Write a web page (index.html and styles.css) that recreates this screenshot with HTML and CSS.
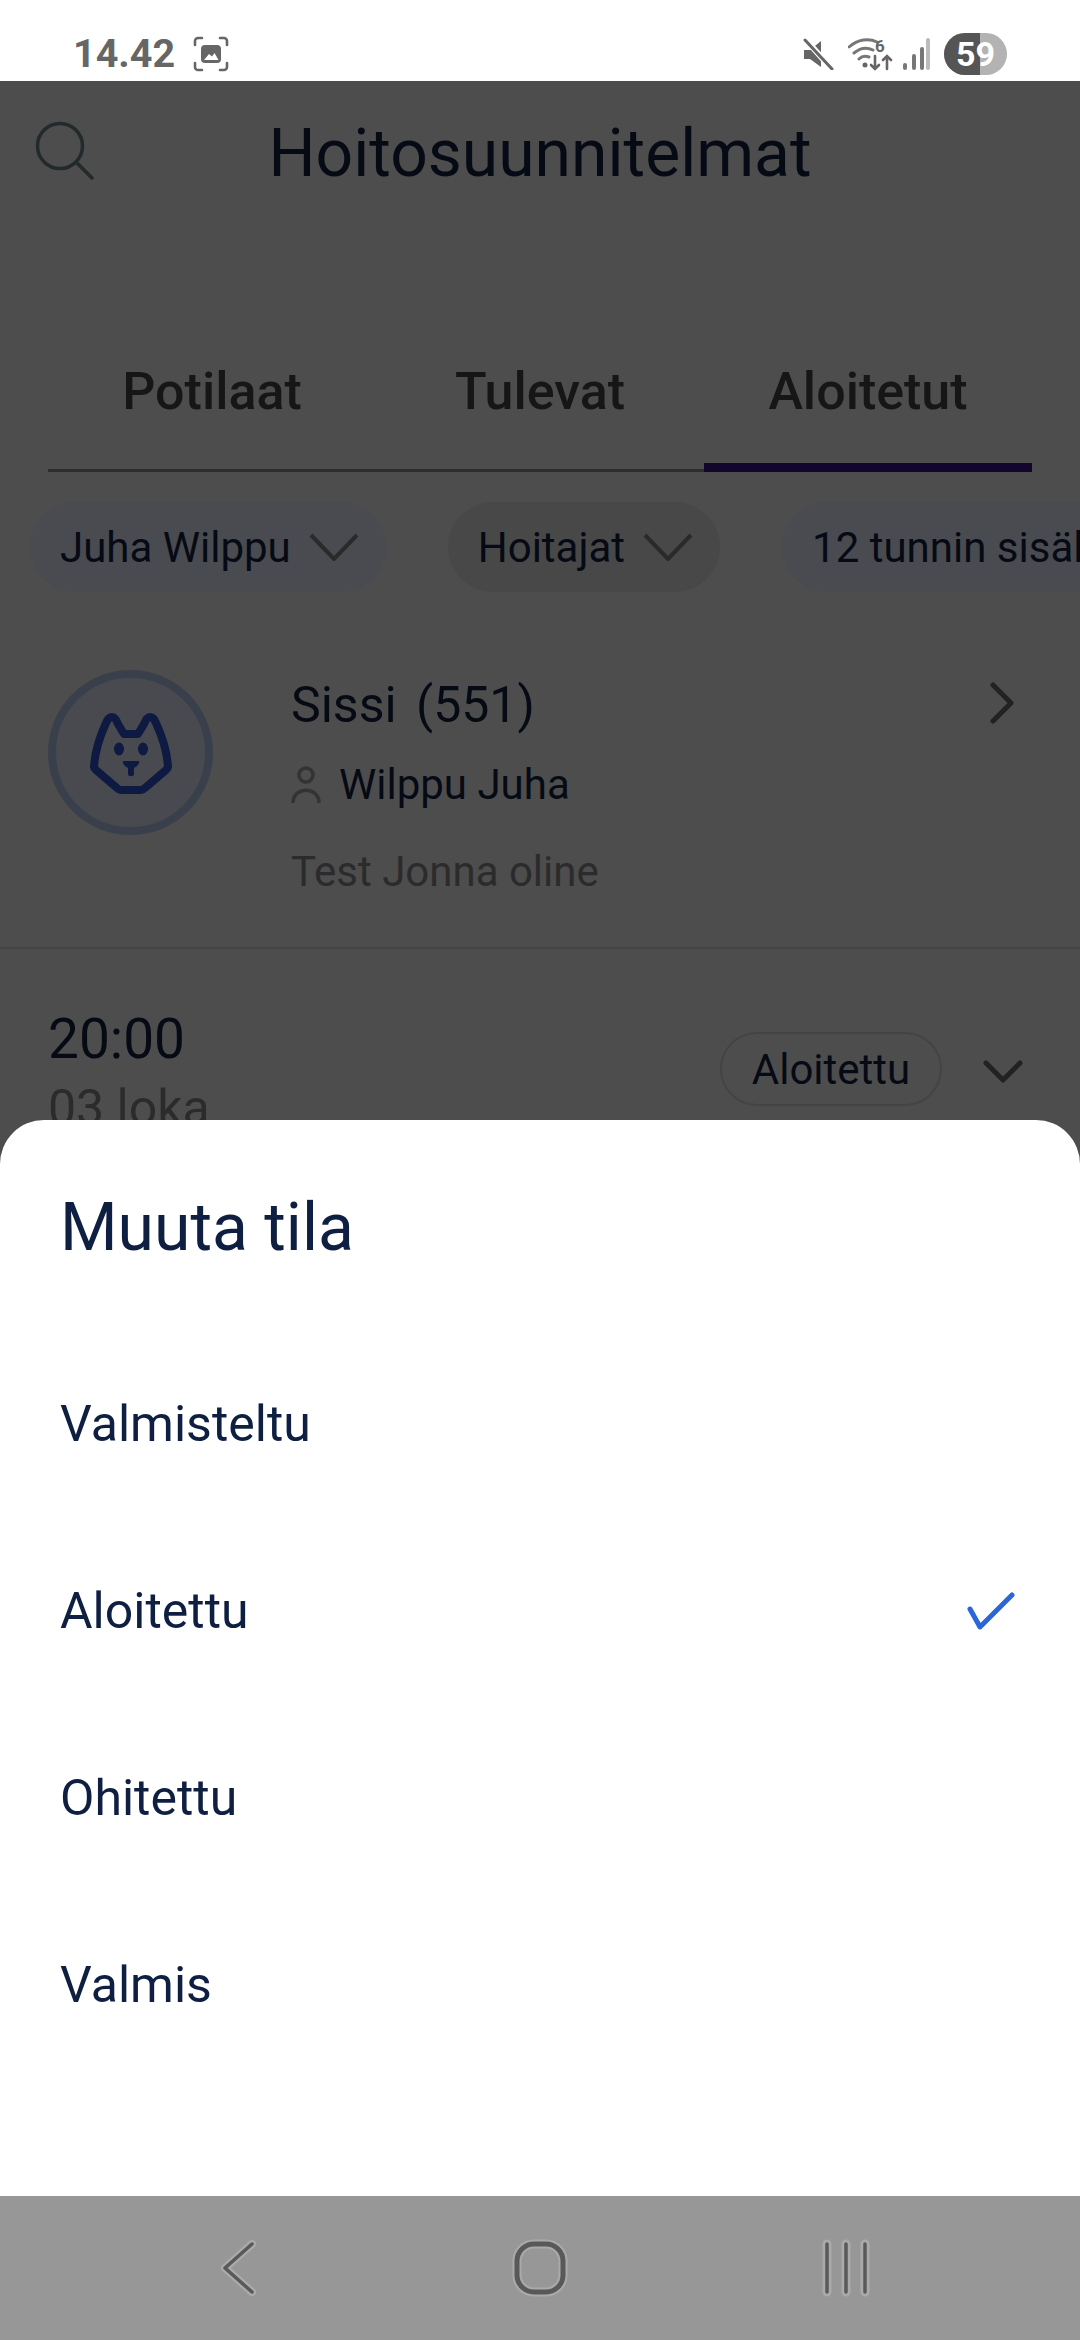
FILE: index.html
```html
<!DOCTYPE html>
<html lang="fi">
<head>
    <meta charset="UTF-8">
    <meta name="viewport" content="width=device-width, initial-scale=1.0">
    <title>Hoitosuunnitelmat</title>
    <link rel="stylesheet" href="styles.css">
</head>
<body>
<div class="phone">
    <div class="status-bar">
        <div class="status-left">
            <span class="clock">14.42</span>
            <svg class="shot-icon" width="36" height="36" viewBox="0 0 36 36" fill="none">
                <path d="M2 9V5a3 3 0 0 1 3-3h4M27 2h4a3 3 0 0 1 3 3v4M34 27v4a3 3 0 0 1-3 3h-4M9 34H5a3 3 0 0 1-3-3v-4" stroke="#666" stroke-width="2.6" stroke-linecap="round"/>
                <rect x="8" y="9" width="20" height="18" rx="4" fill="#666"/>
                <path d="M11 24l5-6 3 2.5 2.5-3.5 4 7z" fill="#fff"/>
            </svg>
        </div>
        <div class="status-right">
            <svg width="32" height="32" viewBox="0 0 32 32">
                <path d="M2 12h6l11-9v26l-11-8H2z" fill="#666"/>
                <path d="M3 1l27 30" stroke="#fff" stroke-width="6"/>
                <path d="M3 2l27 29" stroke="#666" stroke-width="3" stroke-linecap="round"/>
            </svg>
            <svg width="46" height="34" viewBox="0 0 46 34" fill="none">
                <path d="M1 10c9-8 20-9 28-5M6 16c6-5 13-6 19-3M11 22c3-3 7-3 10-2" stroke="#777" stroke-width="3" stroke-linecap="round"/>
                <circle cx="17" cy="28" r="2.5" fill="#666"/>
                <text x="27" y="15" class="wifi-six">6</text>
                <path d="M27 19v13M23 28l4 4 4-4M39 32V20M35 23l4-4 4 4" stroke="#666" stroke-width="2.6" stroke-linecap="round"/>
            </svg>
            <svg class="signal" width="28" height="32" viewBox="0 0 28 32" fill="none" stroke-width="4" stroke-linecap="round">
                <path d="M3 27v3M12 18v12M20 11v19" stroke="#777"/>
                <path d="M26 2v28" stroke="#bbb"/>
            </svg>
            <div class="battery"><span class="battery-level"></span><span class="battery-text">59</span></div>
        </div>
    </div>

    <div class="app">
        <div class="header">
            <svg class="search" width="66" height="66" viewBox="0 0 66 66" fill="none" stroke="#232a2c" stroke-width="3.5">
                <circle cx="25" cy="25" r="22.5"/>
                <path d="M41 41l16 16" stroke-linecap="round"/>
            </svg>
            <div class="page-title">Hoitosuunnitelmat</div>
        </div>

        <div class="tabs">
            <div class="tab">Potilaat</div>
            <div class="tab">Tulevat</div>
            <div class="tab active">Aloitetut</div>
        </div>

        <div class="chips">
            <div class="chip chip-blue">Juha Wilppu
                <svg width="50" height="28" viewBox="0 0 50 28" fill="none" stroke="#2a2a2a" stroke-width="4"><path d="M2 2l23 24L48 2"/></svg>
            </div>
            <div class="chip">Hoitajat
                <svg width="50" height="28" viewBox="0 0 50 28" fill="none" stroke="#2a2a2a" stroke-width="4"><path d="M2 2l23 24L48 2"/></svg>
            </div>
            <div class="chip chip-blue">12 tunnin sisällä</div>
        </div>

        <div class="patient">
            <div class="avatar">
                <svg width="86" height="88" viewBox="0 0 86 88" fill="none">
                    <path d="M24 8c-3 0-4 2-6 6C12 27 7 41 6 58c0 1 1 2 2 3l21 18c1 1 2 2 4 2h20c2 0 3-1 4-2l21-18c1-1 2-2 2-3-1-17-6-31-12-44-2-4-3-6-6-6-3 0-4 3-6 7l-6 10H36l-6-10c-2-4-3-7-6-7z" stroke="#0f1a42" stroke-width="8" stroke-linejoin="round"/>
                    <ellipse cx="31" cy="40" rx="5" ry="6.5" fill="#0f1a42"/>
                    <ellipse cx="55" cy="40" rx="5" ry="6.5" fill="#0f1a42"/>
                    <path d="M35 52h16c1 3-3 6-5 7v6c0 3-6 3-6 0v-6c-2-1-6-4-5-7z" fill="#0f1a42"/>
                </svg>
            </div>
            <div class="patient-info">
                <div class="patient-name">Sissi (551)</div>
                <div class="patient-owner">
                    <svg width="30" height="38" viewBox="0 0 30 38" fill="none" stroke="#333" stroke-width="3.5">
                        <circle cx="15" cy="9" r="7"/>
                        <path d="M2 37c0-17 26-17 26 0"/>
                    </svg>
                    <span>Wilppu Juha</span>
                </div>
                <div class="patient-note">Test Jonna oline</div>
            </div>
            <svg class="patient-arrow" width="24" height="42" viewBox="0 0 24 42" fill="none" stroke="#222" stroke-width="5" stroke-linecap="round" stroke-linejoin="round"><path d="M3 3l18 18L3 39"/></svg>
        </div>

        <div class="task">
            <div class="task-time">
                <div class="time">20:00</div>
                <div class="date">03 loka</div>
            </div>
            <div class="task-status">Aloitettu</div>
            <svg class="task-arrow" width="40" height="24" viewBox="0 0 40 24" fill="none" stroke="#222" stroke-width="5" stroke-linecap="round" stroke-linejoin="round"><path d="M3 3l17 17L37 3"/></svg>
        </div>

        <div class="sheet">
            <div class="sheet-title">Muuta tila</div>
            <div class="option">Valmisteltu</div>
            <div class="option">Aloitettu
                <svg width="48" height="38" viewBox="0 0 48 38" fill="none" stroke="#2b66d9" stroke-width="5" stroke-linecap="round" stroke-linejoin="round"><path d="M3 17l10 18L45 3"/></svg>
            </div>
            <div class="option">Ohitettu</div>
            <div class="option">Valmis</div>
        </div>
    </div>

    <div class="nav-bar">
        <svg width="42" height="60" viewBox="0 0 42 60" fill="none" stroke-linecap="round" stroke-linejoin="round">
            <path d="M35 6L8 30l27 24" stroke="#aaa" stroke-width="8"/>
            <path d="M35 6L8 30l27 24" stroke="#595959" stroke-width="3.5"/>
        </svg>
        <svg width="58" height="60" viewBox="0 0 58 60" fill="none">
            <rect x="6" y="6" width="46" height="48" rx="17" stroke="#aaa" stroke-width="9"/>
            <rect x="6" y="6" width="46" height="48" rx="17" stroke="#595959" stroke-width="5"/>
        </svg>
        <svg width="52" height="60" viewBox="0 0 52 60" fill="none" stroke-linecap="round">
            <path d="M7 6v48M26 6v48M45 6v48" stroke="#aaa" stroke-width="9"/>
            <path d="M7 6v48M26 6v48M45 6v48" stroke="#595959" stroke-width="3.5"/>
        </svg>
    </div>
</div>
</body>
</html>
```

FILE: styles.css
```css
* {
    box-sizing: border-box;
}
body {
    margin: 0;
    font-family: Roboto, "Noto Sans", sans-serif;
    background-color: #fff;
}
.phone {
    width: 1080px;
    height: 2340px;
    display: flex;
    flex-direction: column;
    overflow: hidden;
}

/* status bar */
.status-bar {
    height: 81px;
    flex: none;
    background-color: #fff;
    display: flex;
    justify-content: space-between;
    align-items: center;
    padding: 26px 73px 0 73px;
}
.status-left {
    display: flex;
    align-items: center;
    gap: 18px;
}
.clock {
    font-size: 39.5px;
    font-weight: 700;
    color: #666;
}
.status-right {
    display: flex;
    align-items: center;
    gap: 14px;
}
.signal {
    margin-left: -6px;
}
.wifi-six {
    font-size: 17px;
    font-weight: 700;
    fill: #666;
}
.battery {
    width: 63px;
    height: 42px;
    border-radius: 21px;
    background-color: #b3b3b3;
    position: relative;
    overflow: hidden;
    display: flex;
    align-items: center;
    justify-content: center;
}
.battery-level {
    position: absolute;
    left: 0;
    top: 0;
    bottom: 0;
    width: 36px;
    background-color: #555;
}
.battery-text {
    position: relative;
    font-size: 34px;
    font-weight: 700;
    color: #fff;
}

/* app behind the sheet, dimmed */
.app {
    flex: 1;
    position: relative;
    background-color: #4d4d4d;
    overflow: hidden;
}
.header {
    height: 144px;
    display: flex;
    align-items: center;
    justify-content: center;
    position: relative;
}
.search {
    position: absolute;
    left: 35px;
    top: 40px;
}
.page-title {
    font-size: 66px;
    color: #050a14;
}
.tabs {
    margin: 0 48px;
    height: 247px;
    padding-top: 136px;
    display: grid;
    grid-template-columns: repeat(3, 1fr);
    border-bottom: 3px solid #2e2e2e;
}
.tab {
    font-size: 52px;
    font-weight: 500;
    color: #161616;
    text-align: center;
    position: relative;
}
.tab.active::after {
    content: "";
    position: absolute;
    left: 0;
    right: 0;
    bottom: -3px;
    height: 9px;
    background-color: #12062c;
}
.chips {
    display: flex;
    gap: 62px;
    margin-top: 30px;
    padding-left: 30px;
}
.chip {
    height: 90px;
    border-radius: 45px;
    padding: 0 27px 0 30px;
    flex: none;
    display: flex;
    align-items: center;
    gap: 18px;
    font-size: 42px;
    color: #050a14;
    background-color: #484848;
}
.chip-blue {
    background-color: #494b50;
}
.patient {
    margin-top: 78px;
    height: 279px;
    padding-left: 48px;
    display: flex;
    border-bottom: 2px solid #444;
    position: relative;
}
.avatar {
    width: 165px;
    height: 165px;
    flex: none;
    border-radius: 50%;
    border: 8px solid #3a3f4c;
    background-color: #484a4f;
    display: flex;
    align-items: center;
    justify-content: center;
}
.patient-info {
    margin-left: 78px;
}
.patient-name {
    font-size: 50px;
    line-height: 56px;
    word-spacing: 7px;
    margin-top: 7px;
    color: #050a14;
}
.patient-owner {
    display: flex;
    align-items: center;
    gap: 18px;
    margin-top: 28px;
    font-size: 42px;
    line-height: 48px;
    color: #050a14;
}
.patient-note {
    margin-top: 39px;
    font-size: 42px;
    line-height: 48px;
    color: #2b2b2b;
}
.patient-arrow {
    position: absolute;
    left: 990px;
    top: 12px;
}
.task {
    display: flex;
    align-items: flex-start;
    padding: 58px 0 0 48px;
}
.task-time {
    flex: 1;
}
.time {
    font-size: 55px;
    line-height: 64px;
    color: #050a14;
}
.date {
    font-size: 50px;
    line-height: 60px;
    margin-top: 7px;
    color: #2b2b2b;
}
.task-status {
    height: 74px;
    width: 222px;
    margin-top: 25px;
    border: 2px solid #444;
    border-radius: 37px;
    font-size: 42px;
    color: #050a14;
    display: flex;
    align-items: center;
    justify-content: center;
}
.task-arrow {
    margin: 53px 57px 0 41px;
}

/* bottom sheet */
.sheet {
    position: absolute;
    left: 0;
    right: 0;
    bottom: 0;
    height: 1076px;
    background-color: #fff;
    border-radius: 44px 44px 0 0;
    padding: 0 65px 0 60px;
}
.sheet-title {
    height: 210px;
    padding-top: 70px;
    font-size: 66px;
    line-height: 76px;
    color: #0e1f42;
}
.option {
    height: 187px;
    display: flex;
    align-items: center;
    justify-content: space-between;
    font-size: 50px;
    color: #0e1f42;
}

/* navigation bar */
.nav-bar {
    height: 144px;
    flex: none;
    background-color: #979797;
    display: flex;
    align-items: center;
    justify-content: space-between;
    padding: 0 208px 0 217px;
}
```
